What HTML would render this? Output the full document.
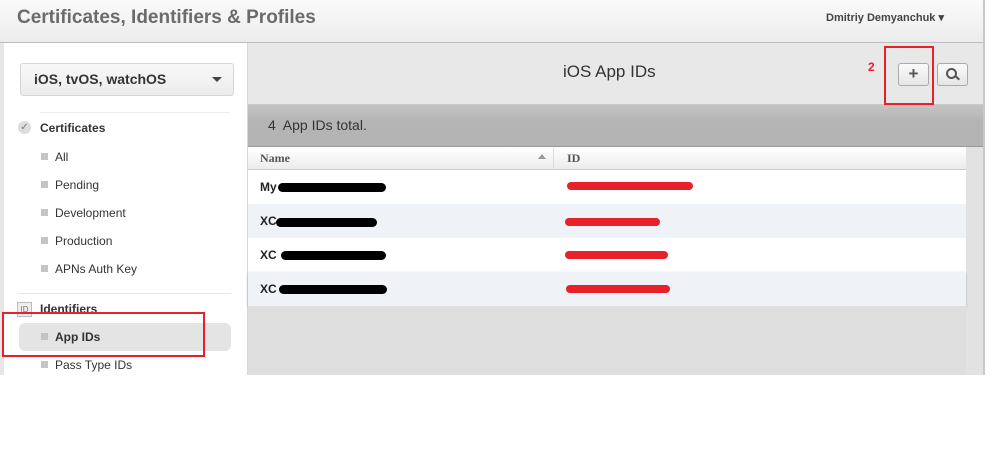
<!DOCTYPE html>
<html><head><style>
body{margin:0;width:990px;height:465px;background:#fff;position:relative;overflow:hidden;font-family:"Liberation Sans",sans-serif}
.a{position:absolute}
.blk{position:absolute;background:#000;height:9px;border-radius:5px}
.red{position:absolute;background:#e8202a;height:8px;border-radius:4px}
.dot{position:absolute;left:41px;width:7px;height:7px;background:#c4c4c4}
.si{position:absolute;left:55px;font-size:12px;color:#333}
</style></head><body>
<div class="a" style="left:0;top:0;width:983px;height:42px;background:linear-gradient(#fafafa,#ececec);border-bottom:1px solid #bcbcbc"></div>
<div class="a" style="left:17px;top:7px;font-size:19px;font-weight:bold;color:#6b6b6b">Certificates, Identifiers &amp; Profiles</div>
<div class="a" style="left:826px;top:11px;font-size:11px;font-weight:bold;color:#444">Dmitriy Demyanchuk ▾</div>
<div class="a" style="left:983px;top:0;width:2px;height:375px;background:#c8c8c8"></div>
<div class="a" style="left:0;top:43px;width:4px;height:332px;background:#e6e6e6"></div>
<div class="a" style="left:4px;top:43px;width:243px;height:332px;background:#fff;border-right:1px solid #d8d8d8"></div>
<div class="a" style="left:20px;top:63px;width:212px;height:31px;border:1px solid #d6d6d6;border-radius:3px;background:linear-gradient(#f8f8f8,#ececec)"></div>
<div class="a" style="left:34px;top:71px;font-size:14px;font-weight:bold;color:#333">iOS, tvOS, watchOS</div>
<div class="a" style="left:212px;top:77px;width:0;height:0;border-left:5px solid transparent;border-right:5px solid transparent;border-top:5px solid #444"></div>
<div class="a" style="left:40px;top:112px;width:190px;height:1px;background:#eee"></div>
<div class="a" style="left:18px;top:121px;width:13px;height:13px;border-radius:50%;background:#ddd;font-size:10px;color:#777;text-align:center;line-height:13px">✓</div>
<div class="a" style="left:40px;top:121px;font-size:12px;font-weight:bold;color:#333">Certificates</div>
<div class="dot" style="top:153px"></div><div class="si" style="top:150px">All</div>
<div class="dot" style="top:181px"></div><div class="si" style="top:178px">Pending</div>
<div class="dot" style="top:209px"></div><div class="si" style="top:206px">Development</div>
<div class="dot" style="top:237px"></div><div class="si" style="top:234px">Production</div>
<div class="dot" style="top:265px"></div><div class="si" style="top:262px">APNs Auth Key</div>
<div class="a" style="left:19px;top:293px;width:212px;height:1px;background:#e6e6e6"></div>
<div class="a" style="left:17px;top:302px;width:13px;height:13px;border:1px solid #bbb;background:#eee;font-size:8px;color:#777;text-align:center;line-height:13px">ID</div>
<div class="a" style="left:40px;top:302px;font-size:12px;font-weight:bold;color:#333">Identifiers</div>
<div class="a" style="left:19px;top:323px;width:212px;height:28px;border-radius:6px;background:#e4e4e4"></div>
<div class="dot" style="top:333px"></div><div class="si" style="top:330px;font-weight:bold">App IDs</div>
<div class="a" style="left:2px;top:312px;width:203px;height:45px;border:2px solid #e8202a;box-sizing:border-box"></div>
<div class="dot" style="top:361px"></div><div class="si" style="top:358px">Pass Type IDs</div>
<div class="a" style="left:248px;top:43px;width:735px;height:61px;background:#e8e8e8;border-bottom:1px solid #c8c8c8"></div>
<div class="a" style="left:563px;top:62px;font-size:17px;color:#333">iOS App IDs</div>
<div class="a" style="left:868px;top:60px;font-size:12px;font-weight:bold;color:#e8202a">2</div>
<div class="a" style="left:898px;top:63px;width:29px;height:21px;border:1px solid #aaa;border-radius:3px;background:linear-gradient(#fafafa,#e6e6e6);font-size:17px;font-weight:bold;color:#555;text-align:center;line-height:20px">+</div>
<div class="a" style="left:937px;top:63px;width:29px;height:21px;border:1px solid #aaa;border-radius:3px;background:linear-gradient(#fafafa,#e6e6e6)"></div>
<div class="a" style="left:946px;top:68px;width:7px;height:7px;border:2px solid #555;border-radius:50%"></div>
<div class="a" style="left:955px;top:77px;width:5px;height:2px;background:#555;transform:rotate(45deg)"></div>
<div class="a" style="left:884px;top:46px;width:50px;height:59px;border:2px solid #e8202a;box-sizing:border-box"></div>
<div class="a" style="left:248px;top:105px;width:735px;height:41px;background:linear-gradient(#c4c4c4,#b4b4b4 40%,#b4b4b4);border-bottom:1px solid #999"></div>
<div class="a" style="left:268px;top:117px;font-size:14px;color:#333">4&nbsp; App IDs total.</div>
<div class="a" style="left:248px;top:147px;width:718px;height:22px;background:linear-gradient(#fff,#ececec);border-bottom:1px solid #ccc"></div>
<div class="a" style="left:966px;top:147px;width:17px;height:228px;background:#e2e2e2"></div>
<div class="a" style="left:260px;top:151px;font-family:'Liberation Serif',serif;font-size:12px;font-weight:bold;color:#555">Name</div>
<div class="a" style="left:538px;top:154px;border-left:4px solid transparent;border-right:4px solid transparent;border-bottom:5px solid #999"></div>
<div class="a" style="left:553px;top:148px;width:1px;height:20px;background:#ddd"></div>
<div class="a" style="left:567px;top:151px;font-family:'Liberation Serif',serif;font-size:12px;font-weight:bold;color:#555">ID</div>
<div class="a" style="left:248px;top:170px;width:718px;height:34px;background:#fff"></div>
<div class="a" style="left:248px;top:204px;width:718px;height:34px;background:#eff2f7"></div>
<div class="a" style="left:248px;top:238px;width:718px;height:34px;background:#fff"></div>
<div class="a" style="left:248px;top:272px;width:718px;height:34px;background:#eff2f7;box-shadow:0 1px 2px #aaa"></div>
<div class="a" style="left:248px;top:306px;width:718px;height:69px;background:#dedede"></div>
<div class="a" style="left:260px;top:180px;font-size:12px;font-weight:bold;color:#222">My</div><div class="blk" style="left:278px;top:183px;width:108px"></div>
<div class="a" style="left:260px;top:214px;font-size:12px;font-weight:bold;color:#222">XC</div><div class="blk" style="left:276px;top:218px;width:101px"></div>
<div class="a" style="left:260px;top:248px;font-size:12px;font-weight:bold;color:#222">XC</div><div class="blk" style="left:281px;top:251px;width:105px"></div>
<div class="a" style="left:260px;top:282px;font-size:12px;font-weight:bold;color:#222">XC</div><div class="blk" style="left:279px;top:285px;width:108px"></div>
<div class="red" style="left:567px;top:182px;width:126px"></div>
<div class="red" style="left:565px;top:218px;width:95px"></div>
<div class="red" style="left:565px;top:251px;width:103px"></div>
<div class="red" style="left:566px;top:285px;width:104px"></div>
</body></html>
